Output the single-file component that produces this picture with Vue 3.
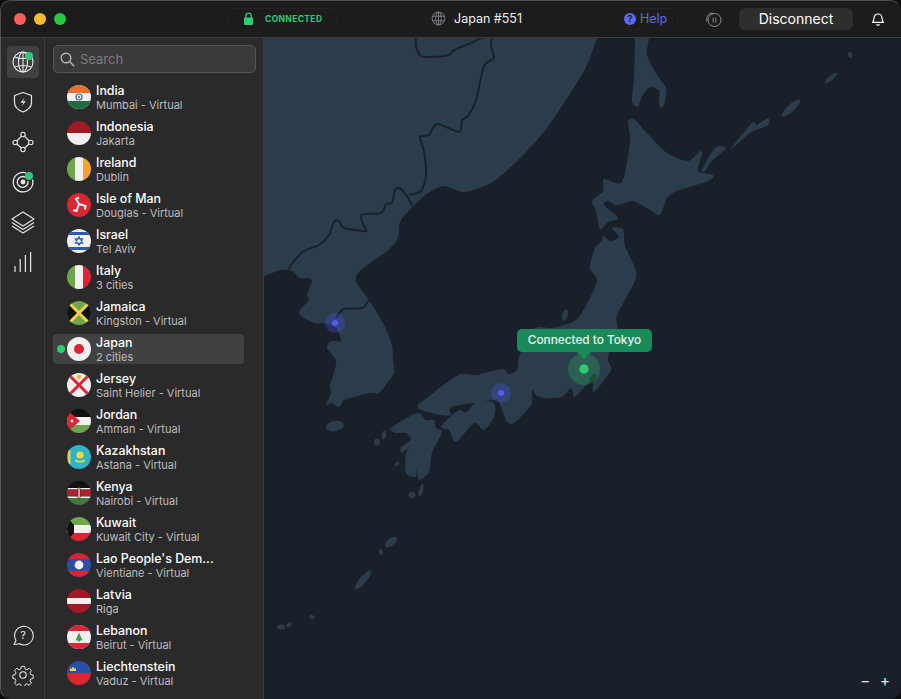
<script setup>
const r = (x, y, width, height, fill) => ({ t: 'rect', a: { x, y, width, height, fill } })
const p = (d, fill) => ({ t: 'path', a: { d, fill } })
const l = (d, stroke, w) => ({ t: 'path', a: { d, stroke, 'stroke-width': w, fill: 'none' } })
const c = (cx, cy, rad, fill) => ({ t: 'circle', a: { cx, cy, r: rad, fill } })

const W = '#f0f0f0', R = '#dc2432', G = '#6ea64e', K = '#111', D = '#a01a26'

const rows = [
  { name: 'India', sub: 'Mumbai - Virtual', flag: [r(0,0,24,24,W), r(0,0,24,8,'#e8702a'), r(0,16,24,8,'#1f6b3c'), { t: 'circle', a: { cx: 12, cy: 12, r: 3, fill: 'none', stroke: '#4a5a9a', 'stroke-width': 1.2 } }, c(12,12,1,'#4a5a9a')] },
  { name: 'Indonesia', sub: 'Jakarta', flag: [r(0,0,24,12,D), r(0,12,24,12,W)] },
  { name: 'Ireland', sub: 'Dublin', flag: [r(0,0,8,24,G), r(8,0,8,24,W), r(16,0,8,24,'#f9a12e')] },
  { name: 'Isle of Man', sub: 'Douglas - Virtual', flag: [r(0,0,24,24,R), l('M12 11 L9 6 L12 4.5 M12 11 L18.5 13 L18 16.5 M12 11 L9.5 18 L6 17', W, 2)] },
  { name: 'Israel', sub: 'Tel Aviv', flag: [r(0,0,24,24,W), r(0,3,24,3,'#2a5cae'), r(0,18,24,3,'#2a5cae'), l('M12 7.8 L15.7 14.2 L8.3 14.2 Z M12 16.2 L8.3 9.8 L15.7 9.8 Z', '#2a5cae', 1.1)] },
  { name: 'Italy', sub: '3 cities', flag: [r(0,0,8,24,G), r(8,0,8,24,W), r(16,0,8,24,R)] },
  { name: 'Jamaica', sub: 'Kingston - Virtual', flag: [r(0,0,24,24,G), p('M0 0 L12 12 L0 24 Z M24 0 L12 12 L24 24 Z', K), l('M1 1 L23 23 M23 1 L1 23', '#f5cf47', 3)] },
  { name: 'Japan', sub: '2 cities', active: true, flag: [r(0,0,24,24,W), c(12,12,5,R)] },
  { name: 'Jersey', sub: 'Saint Helier - Virtual', flag: [r(0,0,24,24,W), l('M2 2 L22 22 M22 2 L2 22', R, 3), p('M10 2 H14 V5 L12 6.5 L10 5 Z', '#f5b13c')] },
  { name: 'Jordan', sub: 'Amman - Virtual', flag: [r(0,0,24,8,K), r(0,8,24,8,W), r(0,16,24,8,G), p('M0 1 L13 12 L0 23 Z', R), c(5,12,1.4,W)] },
  { name: 'Kazakhstan', sub: 'Astana - Virtual', flag: [r(0,0,24,24,'#2fb3c8'), c(13,10,3.6,'#f6d84a'), l('M8 15.5 Q13 18 18 15.5', '#f6d84a', 1.6), r(1,5,2.5,14,'#e3cf55')] },
  { name: 'Kenya', sub: 'Nairobi - Virtual', flag: [r(0,0,24,7,K), r(0,7,24,1.5,W), r(0,8.5,24,7,'#a82530'), r(0,15.5,24,1.5,W), r(0,17,24,7,'#3f7a3a'), p('M12 5.5 C15 8 15 16 12 18.5 C9 16 9 8 12 5.5 Z', '#8e1d28'), r(11.4,7,1.2,10,W)] },
  { name: 'Kuwait', sub: 'Kuwait City - Virtual', flag: [r(0,0,24,8,G), r(0,8,24,8,W), r(0,16,24,8,R), p('M0 0 L7 8 V16 L0 24 Z', K)] },
  { name: "Lao People's Dem...", sub: 'Vientiane - Virtual', flag: [r(0,0,24,6,R), r(0,6,24,12,'#2a4fa8'), r(0,18,24,6,R), c(12,12,4.4,W)] },
  { name: 'Latvia', sub: 'Riga', flag: [r(0,0,24,24,D), r(0,9,24,6,W)] },
  { name: 'Lebanon', sub: 'Beirut - Virtual', flag: [r(0,0,24,24,W), r(0,0,24,6,R), r(0,18,24,6,R), p('M12 7.5 L15.5 15.5 H12.7 V17 H11.3 V15.5 H8.5 Z', '#4e9a44')] },
  { name: 'Liechtenstein', sub: 'Vaduz - Virtual', flag: [r(0,0,24,12,'#2a4fa8'), r(0,12,24,12,R), p('M3 10 V6.8 L4.6 8 L6 5.5 L7.4 8 L9 6.8 V10 Z', '#f5cf47')] }
]

// Catmull-Rom through a flat list of x,y points
const smooth = (pts, closed = true) => {
  const q = []
  for (let i = 0; i < pts.length; i += 2) q.push([pts[i], pts[i + 1]])
  const n = q.length
  const at = (i) => (closed ? q[(i + n) % n] : q[Math.max(0, Math.min(n - 1, i))])
  let d = `M${q[0][0]} ${q[0][1]}`
  const end = closed ? n : n - 1
  for (let i = 0; i < end; i++) {
    const [a, b, e, f] = [at(i - 1), at(i), at(i + 1), at(i + 2)]
    const k = 0.13
    d += ` C${(b[0] + (e[0] - a[0]) * k).toFixed(1)} ${(b[1] + (e[1] - a[1]) * k).toFixed(1)} ${(e[0] - (f[0] - b[0]) * k).toFixed(1)} ${(e[1] - (f[1] - b[1]) * k).toFixed(1)} ${e[0]} ${e[1]}`
  }
  return d + (closed ? 'Z' : '')
}

const land = [
  [240,20, 604,20, 597,38, 584,71, 547,128, 517,161, 491,183, 464,192, 444,186, 424,196, 401,220, 398,238, 387,251, 361,270, 356,281, 369,300, 384,325, 392,345, 393,360, 394,373, 387,383, 379,393, 371,393, 361,395, 354,397, 344,400, 339,407, 332,403, 326,405, 331,393, 330,385, 334,373, 336,360, 327,348, 331,341, 341,341, 336,328, 324,323, 314,323, 299,313, 309,300, 307,295, 312,281, 307,278, 299,278, 292,271, 281,270, 264,276, 240,285],
  [635,20, 650,20, 649,38, 647,55, 657,75, 666,88, 665,101, 662,108, 659,105, 659,91, 650,87, 642,96, 638,107, 632,101, 634,78, 635,38],
  [628,121, 635,120, 647,133, 667,153, 688,161, 700,151, 702,154, 698,171, 713,175, 708,181, 677,191, 667,198, 660,215, 650,210, 633,201, 617,205, 608,201, 604,205, 618,218, 608,222, 600,229, 596,211, 592,201, 603,191, 604,179, 622,182, 630,141],
  [603,235, 610,241, 619,237, 612,228, 623,229, 625,246, 635,268, 635,281, 617,315, 617,328, 608,358, 611,370, 594,392, 592,380, 579,393, 574,397, 571,388, 562,397, 544,398, 536,395, 532,389, 531,405, 514,423, 507,422, 501,407, 497,400, 481,402, 451,407, 451,415, 441,415, 421,410, 418,405, 427,398, 446,383, 461,374, 477,375, 502,369, 509,374, 517,370, 519,358, 530,332, 540,327, 552,328, 573,322, 583,311, 597,281, 590,268, 595,248, 602,241],
  [441,427, 449,418, 459,410, 467,412, 477,402, 494,403, 494,417, 484,430, 474,423, 456,442, 449,430],
  [391,428, 417,413, 426,420, 434,420, 436,428, 442,432, 432,453, 429,472, 419,480, 416,467, 416,477, 406,473, 406,453, 411,445, 402,453, 401,447, 411,440, 406,433, 396,433],
  [702,170, 715,148, 726,148, 712,161, 705,171],
  [730,150, 752,123, 757,125, 768,118, 768,125, 750,133]
].map((s) => smooth(s))

const borders = [
  [412,205, 407,196, 399,188, 395,190, 392,203, 386,204, 381,213, 361,215, 366,230, 364,231, 344,228, 339,221, 334,222, 329,235, 319,245, 304,251, 291,265, 289,270],
  [409,195, 421,191, 426,175, 424,151, 420,137, 429,135, 437,124, 459,132, 462,120, 468,116, 476,100, 484,66, 494,58, 491,45, 493,30],
  [416,30, 416,46, 421,56, 432,57, 449,55, 454,50, 471,43, 481,38, 493,36],
  [369,300, 362,308, 344,309, 336,318]
].map((s) => smooth(s, false))

const isles = [
  [335,426,9,5,-10],[377,442,3,3.5,0],[384,435,2,4.5,10],[397,464,1.5,3,40],[412,495,3.5,3.2,0],[421,490,2,6.5,15],
  [391,542,7,3.6,-38],[381,552,2,3.4,-10],[363,580,3.4,12,40],[312,617,2.6,2,30],[281,627,4,2.4,-5],[289,625,3,2,-40],
  [565,315,2.8,6,15],[791,108,12,3.6,-42],[831,78,8,2.2,-40],[850,55,2,3,-20]
]
</script>

<template>
  <div class="window">
    <header class="bar">
      <div class="lights"><i class="red"></i><i class="amber"></i><i class="green"></i></div>
      <div class="status">
        <svg width="11" height="13" viewBox="0 0 11 13"><path d="M2.8 6V3.8a2.7 2.7 0 0 1 5.4 0V6" fill="none" stroke="#2ecc71" stroke-width="1.3"/><rect x="1" y="5.5" width="9" height="7.5" rx="1" fill="#2ecc71"/></svg>
        <span>CONNECTED</span>
      </div>
      <div class="server">
        <svg width="15" height="15" viewBox="0 0 16 16" fill="none" stroke="#7c7f86" stroke-width="1"><circle cx="8" cy="8" r="6.8"/><ellipse cx="8" cy="8" rx="3" ry="6.8"/><path d="M1.6 5.6h12.8M1.6 10.4h12.8M8 1.2v13.6"/></svg>
        <span>Japan #551</span>
      </div>
      <div class="help">
        <span class="qmark">?</span>
        <span>Help</span>
      </div>
      <svg class="pause" width="18" height="18" viewBox="0 0 18 18" fill="none" stroke="#8a8c90" stroke-width="1"><circle cx="10.5" cy="10" r="6.5"/><path d="M9.2 7.6v5M11.8 7.6v5M3 11.5a7 7 0 0 1 4-8.5l2.5 .3"/></svg>
      <button class="disconnect">Disconnect</button>
      <svg class="bell" width="14" height="15" viewBox="0 0 14 15" fill="none" stroke="#fff" stroke-width="1.2"><path d="M1.5 11.3c1-1 1.5-2 1.5-4.3a4 4 0 0 1 8 0c0 2.3 .5 3.3 1.5 4.3z" stroke-linejoin="round"/><path d="M5.5 13.2a1.6 1.6 0 0 0 3 0"/></svg>
    </header>

    <div class="main">
      <nav class="rail">
        <div class="rail-group">
          <div class="tool on">
            <svg width="24" height="24" viewBox="0 0 24 24" fill="none" stroke="#e8e8e8" stroke-width="1.1"><circle cx="12" cy="12" r="10"/><ellipse cx="12" cy="12" rx="4.5" ry="10"/><path d="M3.5 7Q12 10 20.500 7M3.5 17Q12 14 20.5 17M12 2v20"/></svg>
            <i class="badge"></i>
          </div>
          <div class="tool">
            <svg width="20" height="22" viewBox="0 0 20 22" fill="none" stroke="#e8e8e8" stroke-width="1.2"><path d="M10 1.5l8.5 3v7c0 4.5-3.5 7.5-8.5 9.5-5-2-8.5-5-8.5-9.5v-7z" stroke-linejoin="round"/><path d="M11.5 6.5l-4 5.2h3l-2 3.8 4.3-5.300h-3z" fill="#e8e8e8" stroke="none"/></svg>
          </div>
          <div class="tool">
            <svg width="22" height="22" viewBox="0 0 22 22" fill="none" stroke="#e8e8e8" stroke-width="1.1"><circle cx="11" cy="3.5" r="2.2"/><circle cx="3.2" cy="11.5" r="2.2"/><circle cx="18.8" cy="11.5" r="2.2"/><circle cx="11" cy="18.5" r="2.2"/><path d="M9.5 5.2L4.8 10M12.5 5.2l4.800 4.800M4.800 13l4.700 4M17.200 13l-4.700 4"/></svg>
          </div>
          <div class="tool">
            <svg width="24" height="24" viewBox="0 0 24 24" fill="none" stroke="#e8e8e8" stroke-width="1.3"><path d="M15 2.8A9.8 9.8 0 1 0 21.5 9.5"/><path d="M14.5 7.3A5.4 5.4 0 1 0 17 11"/><circle cx="12" cy="12" r="1.8" fill="#e8e8e8"/></svg>
            <i class="badge"></i>
          </div>
          <div class="tool">
            <svg width="24" height="24" viewBox="0 0 24 24" fill="none" stroke="#e8e8e8" stroke-width="1.1" stroke-linejoin="round"><path d="M12 2L23 9 12 16 1 9z"/><path d="M1 12.5l11 7 11-7M1 16l11 7 11-7"/></svg>
          </div>
          <div class="tool">
            <svg width="18" height="22" viewBox="0 0 18 22" fill="none" stroke="#e8e8e8" stroke-width="1.2"><path d="M1 21v-6M6.2 21V8M11.4 21V4M16.6 21V1"/></svg>
          </div>
        </div>
        <div class="rail-group">
          <div class="tool">
            <svg width="22" height="22" viewBox="0 0 22 22" fill="none" stroke="#e8e8e8" stroke-width="1.1"><path d="M2 20.5l2-4A9.3 9.3 0 1 1 7.5 19.8c-2 .5-3.5 .8-5.500 .7z" stroke-linejoin="round"/><text x="11" y="15" text-anchor="middle" font-size="11" fill="#e8e8e8" stroke="none" font-family="Inter, sans-serif">?</text></svg>
          </div>
          <div class="tool">
            <svg width="22" height="22" viewBox="0 0 24 24" fill="none" stroke="#e8e8e8" stroke-width="1.2" stroke-linejoin="round"><circle cx="12" cy="12" r="3.5"/><path d="M10 1.5h4l.7 3.2 2.1 .9 2.8-1.8 2.8 2.8-1.8 2.8 .9 2.1 3 .7v4l-3 .7-.9 2.1 1.8 2.8-2.8 2.8-2.8-1.8-2.1 .9-.7 3h-4l-.7-3-2.1-.9-2.8 1.8-2.8-2.8 1.8-2.8-.9-2.1-3-.7v-4l3-.7 .9-2.1-1.8-2.8 2.8-2.8 2.8 1.8 2.1-.9z" transform="translate(1.3 1.3) scale(.89)"/></svg>
          </div>
        </div>
      </nav>

      <aside class="list">
        <div class="search">
          <svg width="15" height="15" viewBox="0 0 15 15" fill="none" stroke="#b4b4b4" stroke-width="1.4"><circle cx="6" cy="6" r="4.8"/><path d="M9.6 9.6l4.6 4.6"/></svg>
          <span>Search</span>
        </div>
        <div class="rows">
          <div v-for="row in rows" :key="row.name" class="row" :class="{ active: row.active }">
            <i v-if="row.active" class="live"></i>
            <svg class="flag" width="24" height="24" viewBox="0 0 24 24">
              <component :is="s.t" v-for="(s, i) in row.flag" :key="i" v-bind="s.a" />
            </svg>
            <div class="labels">
              <div class="name">{{ row.name }}</div>
              <div class="sub">{{ row.sub }}</div>
            </div>
          </div>
        </div>
      </aside>

      <section class="map">
        <svg class="geo" viewBox="264 38 637 661" width="637" height="661">
          <path v-for="(d, i) in land" :key="i" :d="d" fill="#2b3d4c" />
          <ellipse v-for="(e, i) in isles" :key="'e' + i" :cx="e[0]" :cy="e[1]" :rx="e[2]" :ry="e[3]" :transform="`rotate(${e[4]} ${e[0]} ${e[1]})`" fill="#2b3d4c" />
          <path v-for="(d, i) in borders" :key="'b' + i" :d="d" fill="none" stroke="#1a202a" stroke-width="2" stroke-linejoin="round" />
          <ellipse cx="593" cy="378" rx="2.5" ry="5" transform="rotate(35 593 378)" fill="#1a202a" />
          <circle cx="335" cy="323" r="10" fill="#4b55ff" fill-opacity=".28" />
          <circle cx="335" cy="323" r="3" fill="#4f5bff" />
          <circle cx="501" cy="393" r="10" fill="#4b55ff" fill-opacity=".28" />
          <circle cx="501" cy="393" r="3" fill="#4f5bff" />
          <circle cx="584" cy="369" r="16" fill="#2ecc71" fill-opacity=".25" />
          <circle cx="584" cy="369" r="4.7" fill="#2ecc71" />
        </svg>
        <div class="tip">Connected to Tokyo</div>
        <div class="zoom"><span>−</span><span>+</span></div>
      </section>
    </div>
  </div>
</template>

<style>
html, body { margin: 0; background: #0c0c0c; }
</style>

<style scoped>
.window {
  position: relative;
  width: 901px;
  height: 699px;
  display: flex;
  flex-direction: column;
  overflow: hidden;
  border-radius: 10px;
  background: #1c1c1c;
  font-family: Inter, "Liberation Sans", sans-serif;
  color: #fff;
}
.window::after {
  content: "";
  position: absolute;
  inset: 0;
  border-radius: 10px;
  border: 1px solid rgba(255, 255, 255, 0.22);
  border-right-color: transparent;
  border-bottom-color: transparent;
  pointer-events: none;
}
.bar {
  height: 37px;
  flex: none;
  display: flex;
  align-items: center;
  border-bottom: 1px solid #3b3b3b;
  background: #1c1c1c;
}
.lights { display: flex; gap: 8px; padding-left: 14px; width: 213px; flex: none; }
.lights i { width: 12px; height: 12px; border-radius: 50%; }
.red { background: #ff5f57; }
.amber { background: #febc2e; }
.green { background: #28c840; }
.status {
  width: 110px;
  height: 22px;
  box-sizing: border-box;
  flex: none;
  display: flex;
  align-items: center;
  gap: 11px;
  padding-left: 15px;
  border: 1px solid #222;
  border-radius: 5px;
  color: #2ecc71;
  font-size: 8.5px;
  font-weight: 700;
  letter-spacing: 0.35px;
}
.server {
  flex: none;
  width: 287px;
  display: flex;
  align-items: center;
  gap: 8px;
  padding-left: 94px;
  box-sizing: border-box;
  font-size: 12.5px;
  color: #eee;
}
.help {
  flex: none;
  width: 36px;
  height: 20px;
  display: flex;
  align-items: center;
  gap: 4px;
  padding-right: 17px;
  border: 1px solid #222;
  border-left: 0;
  border-radius: 0 5px 5px 0;
  color: #5b67ee;
  font-size: 12.5px;
}
.qmark {
  flex: none;
  width: 12px;
  height: 12px;
  border-radius: 50%;
  background: #5b67ee;
  color: #1c1c1c;
  font-size: 9px;
  font-weight: 700;
  text-align: center;
  line-height: 12px;
}
.pause { flex: none; margin-left: 26px; }
.disconnect {
  flex: none;
  margin-left: 17px;
  width: 114px;
  height: 22px;
  padding: 0;
  border: 0;
  border-radius: 6px;
  background: #2e2e2e;
  color: #fff;
  font-family: inherit;
  font-size: 14px;
}
.bell { flex: none; margin-left: 18px; }
.main { flex: 1; min-height: 0; display: flex; }
.rail {
  width: 45px;
  flex: none;
  display: flex;
  flex-direction: column;
  justify-content: space-between;
  padding: 8px 0 8px 7px;
  box-sizing: border-box;
  background: #2a2a2a;
  border-right: 1px solid #3b3b3b;
}
.rail-group { display: flex; flex-direction: column; gap: 8px; }
.tool {
  position: relative;
  width: 32px;
  height: 32px;
  display: flex;
  align-items: center;
  justify-content: center;
  border-radius: 4px;
}
.tool.on { background: #404040; }
.badge {
  position: absolute;
  top: 6px;
  right: 6px;
  width: 8px;
  height: 8px;
  border-radius: 50%;
  background: #2ecc71;
}
.list {
  width: 219px;
  flex: none;
  background: #2a2a2a;
  border-right: 1px solid #3b3b3b;
  box-sizing: border-box;
  padding: 7px 0 0 8px;
  overflow: hidden;
}
.search {
  width: 203px;
  height: 28px;
  box-sizing: border-box;
  display: flex;
  align-items: center;
  gap: 5px;
  padding-left: 6px;
  background: #3a3a3a;
  border: 1px solid #565656;
  border-radius: 5px;
  color: #7d7d7d;
  font-size: 13px;
}
.rows { margin-top: 6px; display: flex; flex-direction: column; }
.row {
  position: relative;
  width: 191px;
  height: 30px;
  margin: 3px 0;
  flex: none;
  display: flex;
  align-items: center;
  gap: 5px;
  padding-left: 14px;
  box-sizing: border-box;
  border-radius: 4px;
}
.row.active { background: #414141; }
.live {
  position: absolute;
  left: 4px;
  top: 11px;
  width: 8px;
  height: 8px;
  border-radius: 50%;
  background: #2ecc71;
}
.flag { flex: none; border-radius: 50%; }
.labels { min-width: 0; }
.name { font-size: 12.4px; line-height: 17px; font-weight: 500; color: #fff; white-space: nowrap; }
.sub { font-size: 11px; line-height: 13px; color: #bdbdbd; white-space: nowrap; }
.map { position: relative; flex: 1; min-width: 0; background: #1a202a; overflow: hidden; }
.geo { display: block; }
.tip {
  position: absolute;
  left: 253px;
  top: 291px;
  width: 135px;
  height: 23px;
  border-radius: 5px;
  background: #1b8a5a;
  color: #e8f5ee;
  font-size: 11.8px;
  font-weight: 500;
  line-height: 23px;
  text-align: center;
}
.tip::after {
  content: "";
  position: absolute;
  left: 60px;
  top: 23px;
  border: 7px solid transparent;
  border-top-color: #1b8a5a;
  border-bottom-width: 0;
}
.zoom {
  position: absolute;
  right: 11px;
  bottom: 9px;
  display: flex;
  gap: 10px;
  font-size: 15px;
  line-height: 18px;
  color: #e8e8e8;
}
</style>
